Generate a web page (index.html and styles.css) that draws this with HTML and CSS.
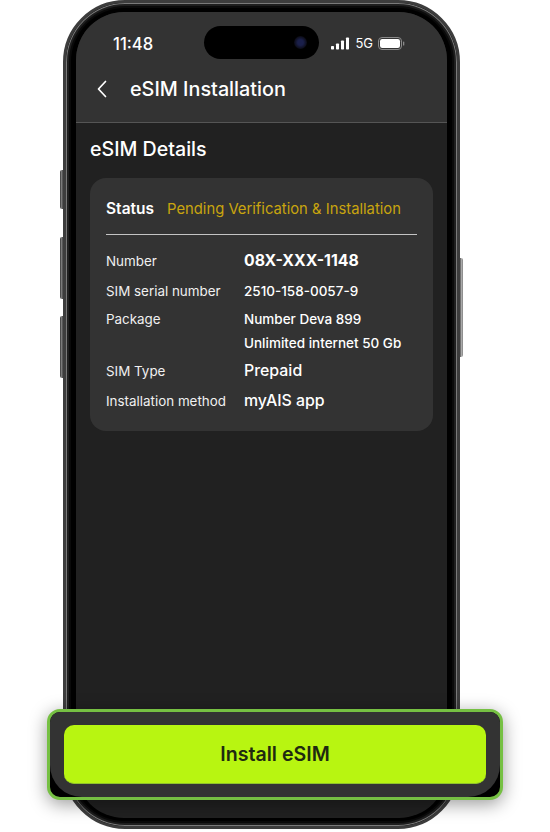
FILE: index.html
```html
<!DOCTYPE html>
<html lang="en">
  <head>
    <meta charset="UTF-8" />
    <meta name="viewport" content="width=device-width, initial-scale=1.0" />
    <title>eSIM Installation</title>
    <link rel="stylesheet" href="styles.css">
  </head>
  <body>
    <div class="phone">
      <span class="side-btn side-mute"></span>
      <span class="side-btn side-up"></span>
      <span class="side-btn side-down"></span>
      <span class="side-btn side-power"></span>
      <div class="bezel">
        <div class="screen">
          <div class="island">
            <span class="island-lens"></span>
          </div>
          <header class="top">
            <div class="status-bar">
              <span class="time">11:48</span>
              <div class="status-icons">
                <svg width="19" height="13" viewBox="0 0 19 13">
                  <rect x="0" y="9" width="3" height="3.5" rx="0.7" fill="#fff" />
                  <rect x="5" y="6.5" width="3" height="6" rx="0.7" fill="#fff" />
                  <rect x="10" y="3.5" width="3" height="9" rx="0.7" fill="#fff" />
                  <rect x="15" y="0.5" width="3" height="12" rx="0.7" fill="#fff" />
                </svg>
                <span class="net">5G</span>
                <svg width="27" height="13" viewBox="0 0 27 13">
                  <rect x="0.5" y="0.5" width="23" height="12" rx="3.5" fill="none" stroke="#8a8a8a" />
                  <rect x="2" y="2" width="20" height="9" rx="2.2" fill="#fff" />
                  <rect x="25" y="4.5" width="1.3" height="4" rx="0.6" fill="#8a8a8a" />
                </svg>
              </div>
            </div>
            <div class="nav">
              <svg class="back" width="12" height="18" viewBox="0 0 12 18">
                <path d="M9.5 1.5 L2.5 9 L9.5 16.5" fill="none" stroke="#fff" stroke-width="1.7" stroke-linecap="round" stroke-linejoin="round" />
              </svg>
              <h1 class="nav-title">eSIM Installation</h1>
            </div>
          </header>
          <main class="content">
            <h2 class="section-title">eSIM Details</h2>
            <section class="card">
              <div class="status-row">
                <span class="status-label">Status</span>
                <span class="status-value">Pending Verification &amp; Installation</span>
              </div>
              <div class="rows">
                <div class="row row-tall">
                  <span class="label">Number</span>
                  <span class="value value-bold">08X-XXX-1148</span>
                </div>
                <div class="row row-tall">
                  <span class="label">SIM serial number</span>
                  <span class="value">2510-158-0057-9</span>
                </div>
                <div class="row row-package">
                  <span class="label">Package</span>
                  <span class="value">Number Deva 899<br />Unlimited internet 50 Gb</span>
                </div>
                <div class="row row-mid">
                  <span class="label">SIM Type</span>
                  <span class="value value-big">Prepaid</span>
                </div>
                <div class="row row-tall">
                  <span class="label">Installation method</span>
                  <span class="value value-big">myAIS app</span>
                </div>
              </div>
            </section>
          </main>
        </div>
      </div>
      <div class="cta">
        <div class="cta-inner">
          <button class="cta-button">Install eSIM</button>
        </div>
      </div>
    </div>
  </body>
</html>
```

FILE: styles.css
```css
html,
body {
  background-color: #fff;
  margin: 0;
  height: 832px;
  overflow: hidden;
}

body {
  font-family: Inter, "Liberation Sans", sans-serif;
  color: #fff;
}

.phone {
  position: relative;
  width: 397px;
  height: 829px;
  margin-left: 63px;
  box-sizing: border-box;
}

.bezel {
  box-sizing: border-box;
  height: 100%;
  padding: 9px 10px 8px;
  border-radius: 62px;
  background-color: #000;
  border: 3px solid #3d3d3d;
  box-shadow: inset 0 0 0 1px #7a7a7a, inset 0 0 0 3px #1e1e1e, inset 0 0 0 5px #0a0a0a;
}

.screen {
  position: relative;
  display: flex;
  flex-direction: column;
  height: 100%;
  border-radius: 48px;
  overflow: hidden;
  background-color: #212121;
}

.side-btn {
  position: absolute;
  width: 3px;
  background: linear-gradient(90deg, #333, #888 60%, #333);
  border-radius: 2px 0 0 2px;
}

.side-mute {
  left: -3px;
  top: 170px;
  height: 39px;
}

.side-up {
  left: -3px;
  top: 237px;
  height: 62px;
}

.side-down {
  left: -3px;
  top: 316px;
  height: 62px;
}

.side-power {
  right: -3px;
  top: 258px;
  height: 99px;
  background: linear-gradient(90deg, #555, #ccc 70%, #444);
  border-radius: 0 2px 2px 0;
}

.island {
  position: absolute;
  top: 14px;
  left: 128px;
  width: 115px;
  height: 33px;
  border-radius: 17px;
  background-color: #000;
}

.island-lens {
  position: absolute;
  top: 10px;
  right: 12px;
  width: 13px;
  height: 13px;
  border-radius: 50%;
  background: radial-gradient(circle, #1a1f4a 0 30%, #0b0b14 70%);
}

.top {
  background-color: #333;
  border-bottom: 1px solid #555;
  height: 111px;
  box-sizing: border-box;
  flex-shrink: 0;
}

.status-bar {
  display: flex;
  justify-content: space-between;
  align-items: center;
  height: 31px;
  padding: 16px 42px 0 37px;
}

.time {
  font-size: 16.6px;
  font-weight: 500;
}

.status-icons {
  display: flex;
  align-items: center;
  gap: 5px;
  margin-top: -1px;
}

.net {
  font-size: 13px;
}

.nav {
  display: flex;
  align-items: center;
  gap: 22px;
  height: 30px;
  padding: 15px 0 0 20px;
}

.nav-title {
  margin: 0;
  font-size: 19.8px;
  font-weight: 500;
}

.content {
  display: flex;
  flex-direction: column;
  flex: 1;
  padding: 15px 14px 0;
}

.section-title {
  margin: 0;
  font-size: 19.6px;
  font-weight: 500;
  line-height: 23px;
}

.card {
  box-sizing: border-box;
  width: 343px;
  height: 253px;
  margin-top: 17px;
  padding: 0 16px;
  border-radius: 16px;
  background-color: #333;
}

.status-row {
  display: flex;
  align-items: center;
  gap: 13px;
  height: 57px;
  padding-top: 5px;
  box-sizing: border-box;
  border-bottom: 1px solid #c4c4c4;
}

.status-label {
  font-size: 15.5px;
  font-weight: 600;
}

.status-value {
  font-size: 14.8px;
  color: #c9a50e;
}

.rows {
  padding-top: 11px;
}

.row {
  display: grid;
  grid-template-columns: 138px 1fr;
  align-items: start;
}

.row-tall,
.row-mid {
  align-items: center;
}

.row-tall {
  height: 30px;
}

.row-mid {
  height: 30px;
}

.row-package {
  padding: 1px 0;
}

.label {
  font-size: 13.4px;
  line-height: 24px;
  color: #f0f0f0;
}

.value {
  font-size: 13.5px;
  font-weight: 500;
  line-height: 24px;
}

.value-bold {
  font-size: 15.8px;
  font-weight: 700;
}

.value-big {
  font-size: 15.9px;
}

.cta {
  position: absolute;
  left: -16px;
  top: 709px;
  box-sizing: border-box;
  width: 456px;
  height: 91px;
  border: 3px solid #76c043;
  border-radius: 13px;
  background-color: #000;
  box-shadow: 0 4px 18px rgba(0, 0, 0, 0.4);
}

.cta-inner {
  box-sizing: border-box;
  height: 100%;
  padding: 13px 14px;
  border-radius: 10px 10px 32px 32px;
  background-color: #333;
}

.cta-button {
  display: block;
  width: 100%;
  height: 59px;
  border: none;
  border-bottom: 1px solid #8fc22a;
  border-radius: 10px;
  background-color: #b8f511;
  color: #1f2a10;
  font-family: inherit;
  font-size: 19.6px;
  font-weight: 600;
}
```
